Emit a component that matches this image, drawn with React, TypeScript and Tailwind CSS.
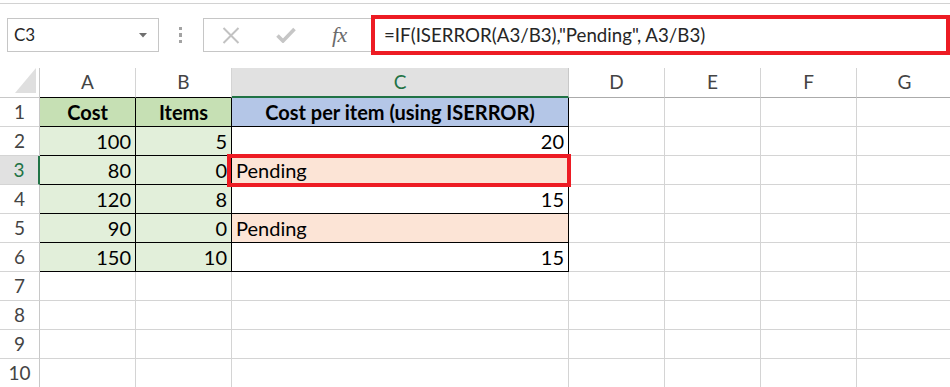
import React from "react";

const cols = ["A", "B", "C", "D", "E", "F", "G"];

const data = [
  { a: "Cost", b: "Items", c: "Cost per item (using ISERROR)", head: true },
  { a: "100", b: "5", c: "20" },
  { a: "80", b: "0", c: "Pending" },
  { a: "120", b: "8", c: "15" },
  { a: "90", b: "0", c: "Pending" },
  { a: "150", b: "10", c: "15" },
];

const FormulaBar = () => (
  <div className="flex items-center h-[40px] mt-[11px] mb-[13px]">
    <div className="ml-[7px] w-[152px] h-[34px] border border-[#c6c6c6] flex items-center justify-between pl-[6px] pr-[11px]">
      <span className="text-[17px] text-[#262626]">C3</span>
      <svg width="8" height="5" viewBox="0 0 8 5">
        <path d="M0 0 L8 0 L4 4.5 Z" fill="#6f6f6f" />
      </svg>
    </div>
    <div className="ml-[20px] flex flex-col gap-[3px]">
      <div className="w-[3px] h-[3.5px] bg-[#a3a3a3]" />
      <div className="w-[3px] h-[3.5px] bg-[#a3a3a3]" />
      <div className="w-[3px] h-[3.5px] bg-[#a3a3a3]" />
    </div>
    <div className="ml-[21px] w-[168px] h-[34px] border border-[#c6c6c6] border-r-0 flex items-center">
      <svg className="ml-[18px]" width="18" height="17" viewBox="0 0 18 17">
        <path d="M1.5 1 L16.5 16 M16.5 1 L1.5 16" stroke="#c2c2c2" strokeWidth="2" />
      </svg>
      <svg className="ml-[36px]" width="20" height="16" viewBox="0 0 20 16">
        <path d="M1.5 8.5 L7 14 L18.5 2" stroke="#c6c6c6" strokeWidth="3.6" fill="none" />
      </svg>
      <span className="ml-[36px] font-['Liberation_Serif',serif] italic text-[22px] text-[#6b6b6b] leading-none tracking-[-0.5px]">
        fx
      </span>
    </div>
    <div className="flex-1 h-[40px] border-4 border-[#ed1c24] pl-[9px] flex items-center text-[18.7px] text-[#262626]">
      =IF(ISERROR(A3/B3),"Pending", A3/B3)
    </div>
  </div>
);

export default function App() {
  return (
    <div className="w-[950px] h-[387px] bg-white overflow-hidden font-['Lato',sans-serif]">
      <div className="h-[4px] border-b border-[#d2d2d2]" />
      <FormulaBar />
      <div className="grid grid-cols-[40px_96px_96px_337px_96px_96px_96px_96px] grid-rows-[30px_repeat(10,29px)]">
        <div className="border-r border-b border-[#c8c8c8] flex items-end justify-end pr-[3px] pb-[4px]">
          <svg width="21" height="25" viewBox="0 0 21 25">
            <path d="M0 25 L21 25 L21 0 Z" fill="#dfdfdf" />
          </svg>
        </div>
        {cols.map((c) => (
          <div
            key={c}
            className={
              c === "C"
                ? "bg-[#e1e1e1] border-r border-r-[#c8c8c8] border-b-2 border-b-[#217346] text-[#217346] flex items-center justify-center text-[19px]"
                : c === "A" || c === "B"
                ? "border-r border-r-[#d4d4d4] border-b border-b-black text-[#444] flex items-center justify-center text-[19px]"
                : "border-r border-r-[#d4d4d4] border-b border-b-[#ababab] text-[#444] flex items-center justify-center text-[19px]"
            }
          >
            {c}
          </div>
        ))}
        {Array.from({ length: 10 }, (_, i) => {
          const r = i + 1;
          const d = data[i];
          const sel = r === 3;
          return (
            <React.Fragment key={r}>
              <div
                className={
                  sel
                    ? "bg-[#e1e1e1] border-r-2 border-r-[#217346] border-b border-b-[#d4d4d4] text-[#217346] flex items-center justify-center text-[19px]"
                    : "border-r border-r-[#c8c8c8] border-b border-b-[#d4d4d4] text-[#444] flex items-center justify-center text-[19px]"
                }
              >
                {r}
              </div>
              {d ? (
                <>
                  <div
                    className={
                      d.head
                        ? "bg-[#c6e0b4] border-r border-b border-black flex items-center justify-center font-bold text-[20px] text-black"
                        : "bg-[#e2efda] border-r border-b border-black flex items-center justify-end pr-[4px] text-[20px] text-black"
                    }
                  >
                    {d.a}
                  </div>
                  <div
                    className={
                      d.head
                        ? "bg-[#c6e0b4] border-r border-b border-black flex items-center justify-center font-bold text-[20px] text-black"
                        : "bg-[#e2efda] border-r border-b border-black flex items-center justify-end pr-[4px] text-[20px] text-black"
                    }
                  >
                    {d.b}
                  </div>
                  <div
                    className={
                      d.head
                        ? "bg-[#b4c6e7] border-r border-b border-black flex items-center justify-center font-bold text-[20px] text-black"
                        : d.c === "Pending"
                        ? "relative bg-[#fce4d6] border-r border-b border-black flex items-center justify-start pl-[4px] text-[20px] text-black"
                        : "border-r border-b border-black flex items-center justify-end pr-[4px] text-[20px] text-black"
                    }
                  >
                    {d.c}
                    {sel && (
                      <div className="absolute -left-[5px] -top-[2px] w-[344px] h-[33px] border-4 border-[#ed1c24]" />
                    )}
                  </div>
                </>
              ) : (
                <>
                  <div className="border-r border-b border-[#d4d4d4]" />
                  <div className="border-r border-b border-[#d4d4d4]" />
                  <div className="border-r border-b border-[#d4d4d4]" />
                </>
              )}
              <div className="border-r border-b border-[#d4d4d4]" />
              <div className="border-r border-b border-[#d4d4d4]" />
              <div className="border-r border-b border-[#d4d4d4]" />
              <div className="border-r border-b border-[#d4d4d4]" />
            </React.Fragment>
          );
        })}
      </div>
    </div>
  );
}
